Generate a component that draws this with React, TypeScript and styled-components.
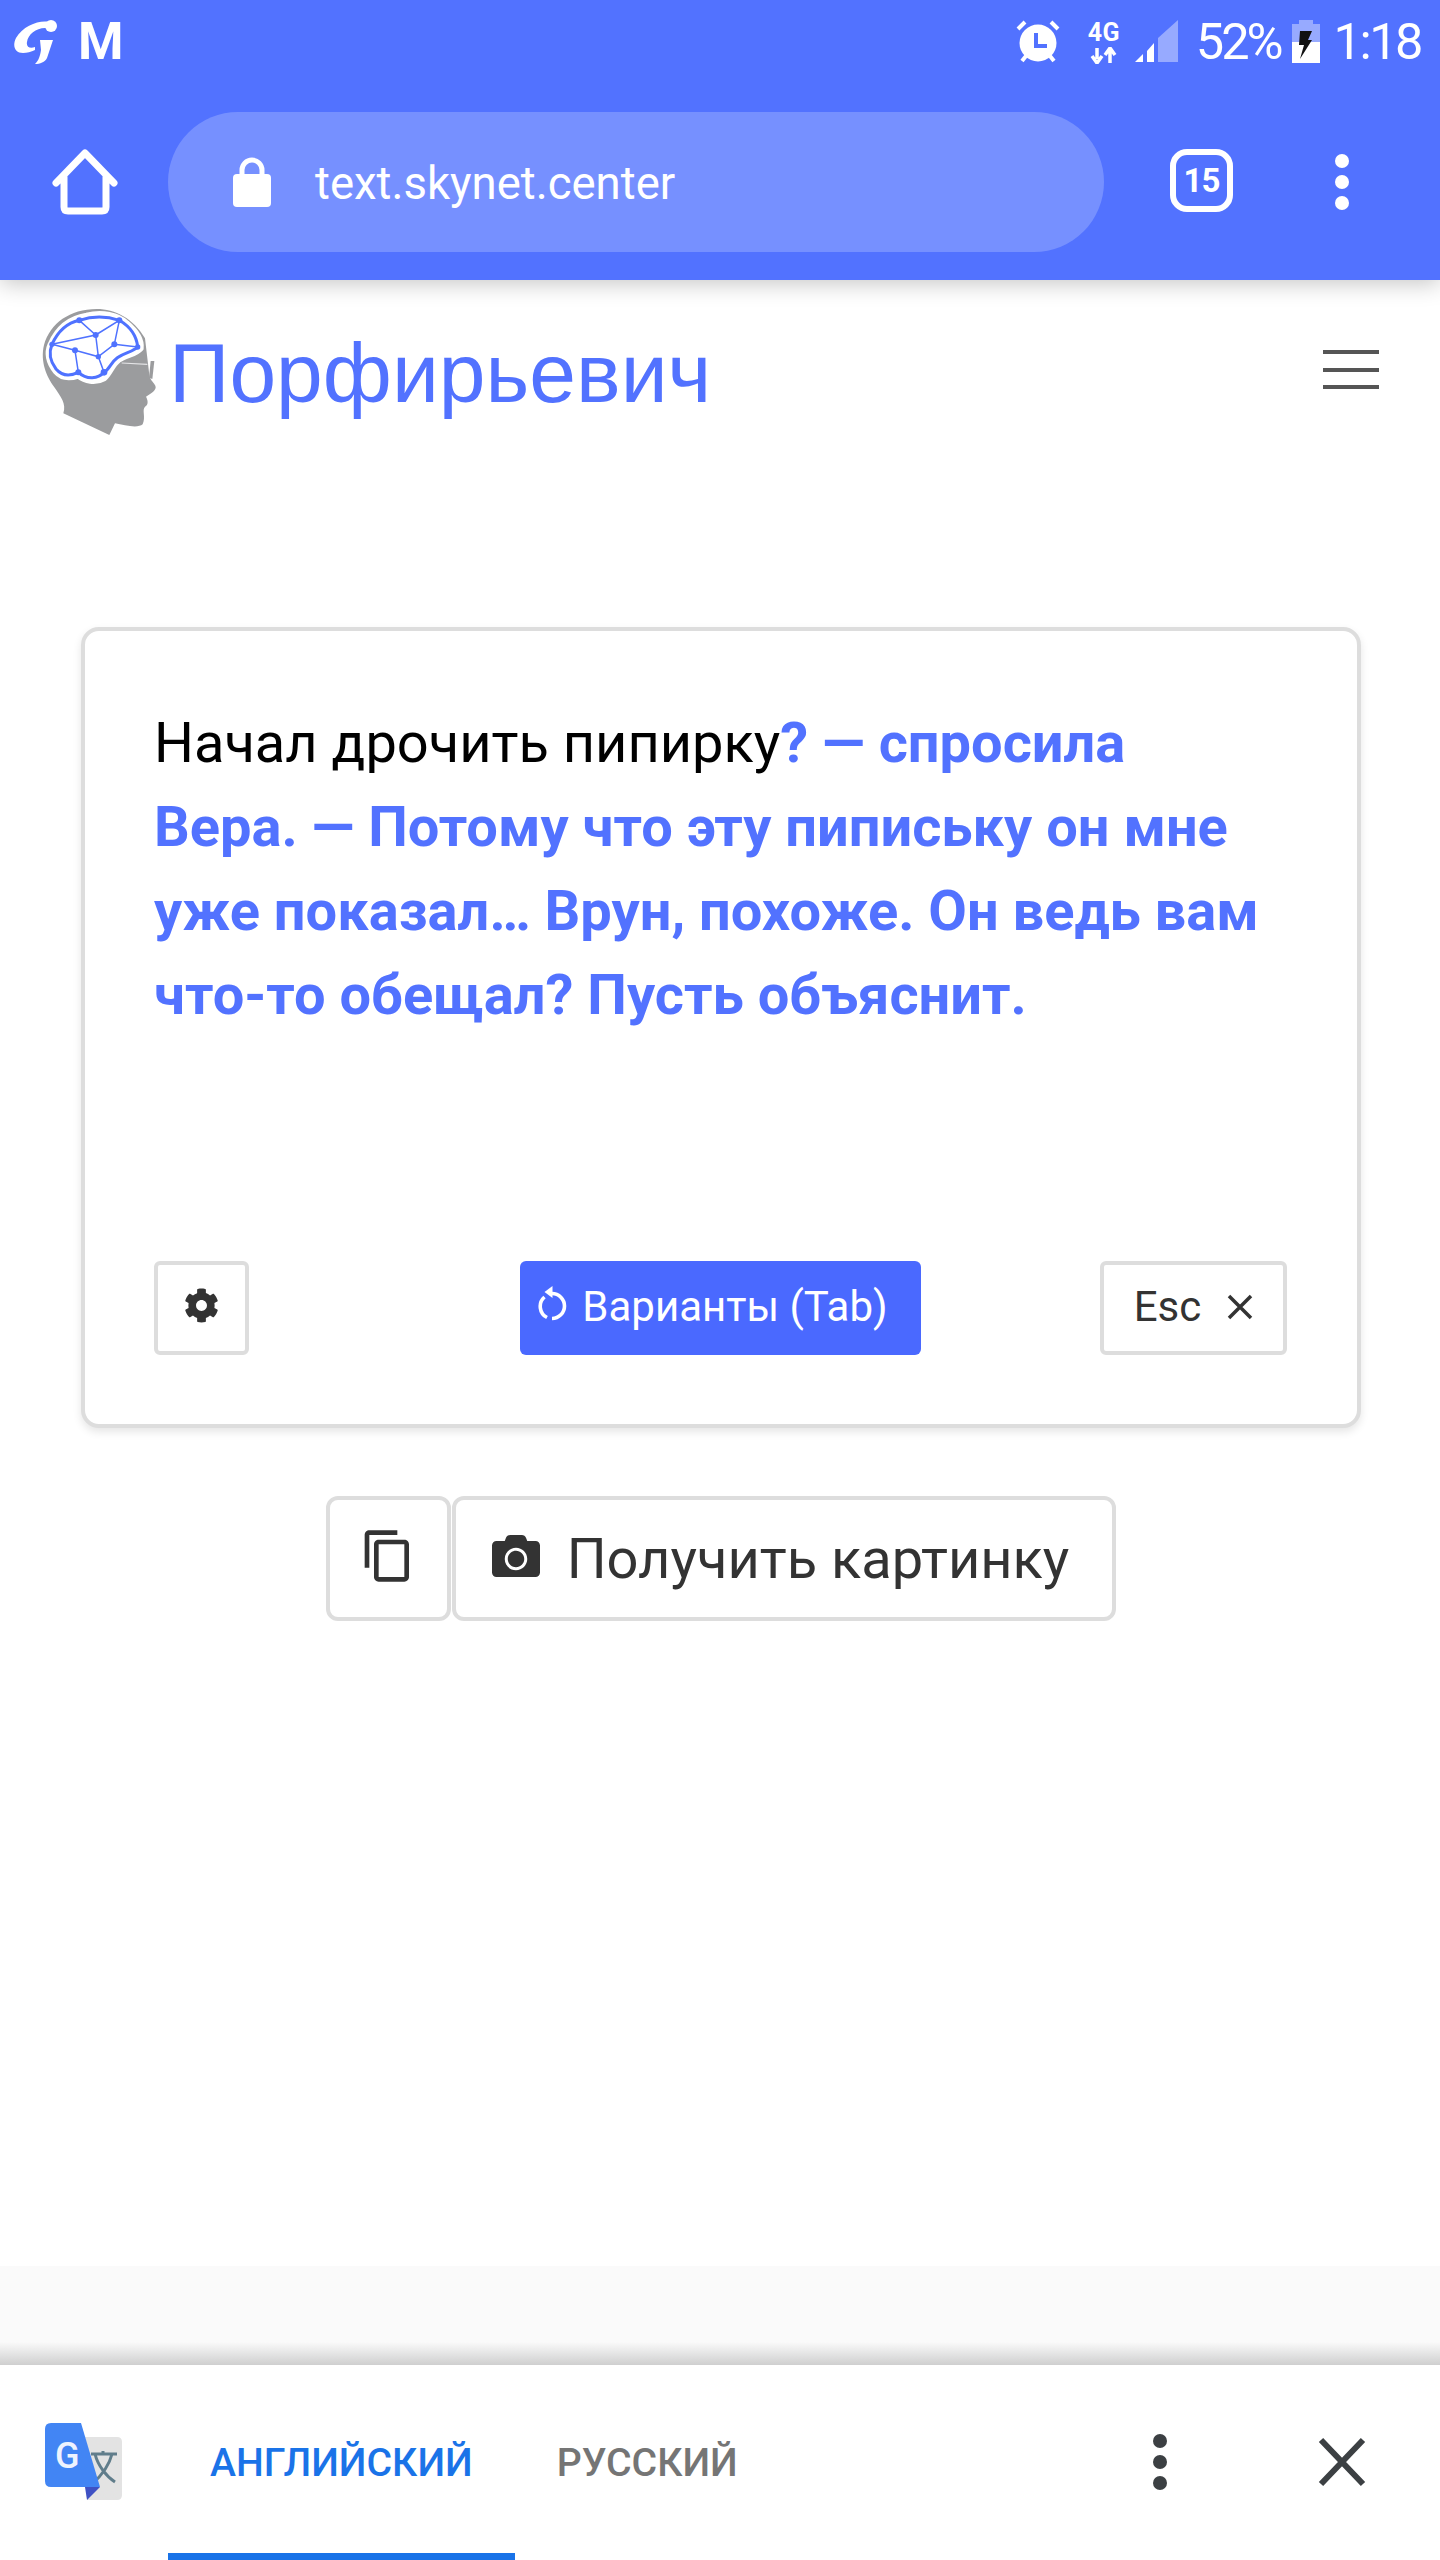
import React from "react";
import styled, { createGlobalStyle } from "styled-components";
import { FaCog, FaCamera } from "react-icons/fa";
import { MdContentCopy } from "react-icons/md";

const Global = createGlobalStyle`
  html, body { margin: 0; padding: 0; background: #fff; }
  * { box-sizing: border-box; }
  body { font-family: Roboto, "Liberation Sans", sans-serif; }
`;

const Page = styled.div`
  width: 1440px;
  height: 2560px;
  display: flex;
  flex-direction: column;
  overflow: hidden;
  background: #fff;
`;

const BrowserChrome = styled.header`
  flex: none;
  height: 280px;
  background: #5272ff;
  color: #fff;
  box-shadow: 0 3px 22px rgba(0, 0, 0, 0.24);
  position: relative;
  z-index: 2;
`;

const StatusBar = styled.div`
  height: 80px;
  display: flex;
  align-items: flex-start;
  justify-content: space-between;
  padding: 0 19px 0 13px;
`;

const StatusGroup = styled.div`
  display: flex;
  align-items: flex-start;
`;

const NoticeLogo = styled.svg`
  flex: none;
  margin-top: 20px;
`;

const NoticeM = styled.span`
  font: 700 52px/1 Roboto, sans-serif;
  margin: 16px 0 0 19px;
`;

const StatusText = styled.span<{ $ml: number; $ls: number }>`
  font: 400 50.5px/1 Roboto, sans-serif;
  letter-spacing: ${(p) => p.$ls}px;
  margin: 17px 0 0 ${(p) => p.$ml}px;
  white-space: nowrap;
`;

const IconSlot = styled.svg<{ $ml: number; $mt: number }>`
  flex: none;
  display: block;
  margin: ${(p) => p.$mt}px 0 0 ${(p) => p.$ml}px;
`;

const NetBadge = styled.div`
  width: 34px;
  margin: 20px 0 0 27px;
  display: flex;
  flex-direction: column;
  align-items: center;
  gap: 2px;
`;

const NetLabel = styled.span`
  font: 700 25px/1 Roboto, sans-serif;
  letter-spacing: 0.5px;
  white-space: nowrap;
`;

const Toolbar = styled.div`
  height: 200px;
  display: flex;
  align-items: flex-start;
  padding-top: 32px;
`;

const HomeButton = styled.svg`
  flex: none;
  margin: 37px 0 0 52px;
`;

const UrlPill = styled.div`
  flex: none;
  width: 936px;
  height: 140px;
  margin-left: 50px;
  padding-left: 65px;
  border-radius: 70px;
  background: #7690ff;
  display: flex;
  align-items: center;
`;

const UrlText = styled.span`
  font: 400 45.5px/1 Roboto, sans-serif;
  margin: 4px 0 0 44px;
`;

const TabCount = styled.div`
  flex: none;
  width: 63px;
  height: 63px;
  margin: 37px 0 0 66px;
  border: 6px solid #fff;
  border-radius: 17px;
  display: flex;
  align-items: center;
  justify-content: center;
  font: 700 33px/1 Roboto, sans-serif;
  letter-spacing: -1px;
`;

const Dots = styled.div<{ $size: number; $gap: number; $color: string }>`
  flex: none;
  display: flex;
  flex-direction: column;
  gap: ${(p) => p.$gap}px;
  i {
    display: block;
    width: ${(p) => p.$size}px;
    height: ${(p) => p.$size}px;
    border-radius: 50%;
    background: ${(p) => p.$color};
  }
`;

const ToolbarDots = styled(Dots)`
  margin: 42px 0 0 102px;
`;

const SiteNav = styled.nav`
  flex: none;
  height: 347px;
  display: flex;
  align-items: flex-start;
  padding-left: 30px;
`;

const Logo = styled.svg`
  flex: none;
  margin-top: 15px;
`;

const Brand = styled.a`
  font: 400 84px/1 "Liberation Sans", Arial, sans-serif;
  color: #5272ff;
  margin: 51px 0 0 -1px;
  white-space: nowrap;
`;

const Burger = styled.div`
  flex: none;
  width: 56px;
  margin: 70px 61px 0 auto;
  display: flex;
  flex-direction: column;
  gap: 13.5px;
  i {
    display: block;
    height: 4px;
    background: #555;
  }
`;

const Main = styled.main`
  flex: 1;
  display: flex;
  flex-direction: column;
  align-items: center;
`;

const Card = styled.section`
  width: 1280px;
  margin-left: 2px;
  padding: 70px 70px 69px 69px;
  background: #fff;
  border: 4px solid #ddd;
  border-radius: 18px;
  box-shadow: 0 4px 8px rgba(0, 0, 0, 0.1);
`;

const Story = styled.div`
  height: 560px;
  padding-right: 14px;
  font: 400 56px/84px Roboto, sans-serif;
  color: #000;
  b {
    font-weight: 700;
    color: #5272ff;
  }
`;

const CardActions = styled.div`
  display: grid;
  grid-template-columns: 1fr auto 1fr;
  align-items: stretch;
`;

const OutlineButton = styled.button`
  height: 94px;
  padding: 0;
  background: #fff;
  border: 4px solid #ddd;
  border-radius: 6px;
  color: #333;
  display: flex;
  align-items: center;
  justify-content: center;
`;

const GearButton = styled(OutlineButton)`
  width: 95px;
  font-size: 35px;
  padding-bottom: 5px;
  justify-self: start;
`;

const PrimaryButton = styled.button`
  width: 401px;
  height: 94px;
  padding: 0 15px 2px 0;
  border: 0;
  border-radius: 6px;
  background: #4a69ff;
  color: #fff;
  display: flex;
  align-items: center;
  justify-content: center;
  gap: 14px;
  font: 400 42px/1 Roboto, sans-serif;
`;

const EscButton = styled(OutlineButton)`
  width: 187px;
  gap: 26px;
  padding-bottom: 2px;
  justify-self: end;
  font: 400 42px/1 Roboto, sans-serif;
`;

const ReloadSvg = styled.svg`
  flex: none;
  margin-bottom: 6px;
`;

const ShareRow = styled.div`
  display: flex;
  gap: 1px;
  margin-top: 68px;
  margin-left: 1px;
`;

const ShareButton = styled.button<{ $w: number; $pr?: number }>`
  width: ${(p) => p.$w}px;
  height: 125px;
  padding: 0 ${(p) => p.$pr ?? 0}px 0 0;
  background: #fff;
  border: 4px solid #ddd;
  border-radius: 12px;
  color: #333;
  display: flex;
  align-items: center;
  justify-content: center;
  gap: 27px;
  font: 400 56px/1 Roboto, sans-serif;
  svg {
    margin-bottom: 6px;
  }
`;

const FooterStrip = styled.div`
  flex: none;
  height: 99px;
  background: linear-gradient(#fafafa 0, #fafafa 76px, #cfcfcf 99px);
`;

const TranslateBar = styled.div`
  flex: none;
  height: 195px;
  display: flex;
  align-items: stretch;
  background: #fff;
`;

const TranslateLogo = styled.svg`
  flex: none;
  margin: 58px 0 0 45px;
`;

const Tab = styled.div<{ $active?: boolean }>`
  flex: none;
  padding: 9px 42px 0;
  display: flex;
  align-items: center;
  font: 500 39.2px/1 Roboto, sans-serif;
  color: ${(p) => (p.$active ? "#1a73e8" : "#757575")};
  border-bottom: 7px solid ${(p) => (p.$active ? "#1a73e8" : "transparent")};
`;

const TabList = styled.div`
  display: flex;
  margin-left: 45px;
`;

const TranslateDots = styled(Dots)`
  margin: 69px 0 0 auto;
`;

const TranslateClose = styled.svg`
  flex: none;
  margin: 72px 74px 0 151px;
`;

const LogoMark = () => (
  <Logo width={140} height={145} viewBox="0 0 420 435">
    <path
      d="M200 42C120 42 60 85 42 150C30 200 50 245 72 275C92 305 110 325 100 355L238 420L255 385C285 392 325 400 338 388C348 365 335 345 345 335C358 328 352 312 348 305C362 295 382 285 376 272C368 258 360 255 358 240L345 130C310 70 255 42 200 42Z"
      fill="#9b9c9e"
    />
    <path
      d="M62 148C85 95 120 70 170 62C215 50 265 60 290 85C320 110 335 135 332 160C320 175 290 180 265 195C245 210 240 235 222 250C195 265 165 258 145 242C120 250 95 250 78 230C58 205 50 175 62 148Z"
      fill="#fff"
      stroke="#fff"
      strokeWidth="18"
    />
    <path
      d="M66 148C88 100 120 82 148 76C190 62 235 65 268 76C300 95 320 125 323 156C310 170 285 172 262 188C242 202 240 222 222 232C205 252 170 255 145 232C118 245 95 242 78 222C60 198 56 172 66 148Z"
      fill="#fff"
      stroke="#4f72ff"
      strokeWidth="9"
      strokeLinejoin="round"
    />
    <g stroke="#4f72ff" strokeWidth="4.5" fill="none">
      <path d="M66 148L197 120L148 76M197 120L268 76L253 148L205 185L197 120M253 148L323 156M66 148L135 166L205 185L222 232M135 166L145 232" />
    </g>
    <g fill="#4f72ff">
      <circle cx="148" cy="76" r="9" />
      <circle cx="268" cy="76" r="9" />
      <circle cx="197" cy="120" r="9" />
      <circle cx="253" cy="148" r="9" />
      <circle cx="66" cy="148" r="8" />
      <circle cx="323" cy="156" r="8" />
      <circle cx="135" cy="166" r="9" />
      <circle cx="205" cy="185" r="8" />
      <circle cx="145" cy="232" r="9" />
      <circle cx="222" cy="232" r="10" />
    </g>
    <path d="M275 204L352 208" fill="none" stroke="#e4e4e6" strokeWidth="3.5" />
    <path d="M362 198L373 198L367 252L357 248Z" fill="#9b9c9e" />
  </Logo>
);

const GMark = () => (
  <NoticeLogo width={46} height={44} viewBox="0 0 46 44">
    <path d="M36 2C26 0 10 6 3 18C-1 26 2 33 10 33C14 33 18 32 22 30L22 27C17 29 13 27 14 22C15 14 24 7 34 8Z" fill="#fff" />
    <circle cx="38" cy="6" r="6" fill="#fff" />
    <path d="M27 20H40L34 38C32 42 27 44 22 44C26 40 27 36 28 30Z" fill="#fff" />
  </NoticeLogo>
);

const AlarmIcon = () => (
  <IconSlot $ml={0} $mt={20} width={44} height={44} viewBox="0 0 44 44">
    <path d="M2 9L9 2M42 9L35 2" stroke="#fff" strokeWidth="4" />
    <path d="M6 41L10 36M38 41L34 36" stroke="#fff" strokeWidth="4" />
    <circle cx="22" cy="23" r="18.5" fill="#fff" />
    <path d="M20 13V26H31" fill="none" stroke="#5272ff" strokeWidth="4" />
  </IconSlot>
);

const SignalIcon = () => (
  <IconSlot $ml={14} $mt={19} width={44} height={44} viewBox="0 0 44 44">
    <path d="M0 43L8 35V43Z" fill="#fff" />
    <path d="M12 43V32L19 24V43Z" fill="#fff" />
    <path d="M23 43V19L43 1V43Z" fill="#fff" fillOpacity="0.4" />
  </IconSlot>
);

const BatteryIcon = () => (
  <IconSlot $ml={11} $mt={20} width={28} height={43} viewBox="0 0 28 43">
    <path d="M7 0H21V4H28V43H0V4H7Z" fill="#fff" fillOpacity="0.4" />
    <path d="M0 22H28V43H0Z" fill="#fff" />
    <path d="M8 11H20L16 20H20L8 39L12 25H7Z" fill="#111" />
  </IconSlot>
);

const HomeIcon = () => (
  <HomeButton width={66} height={66} viewBox="0 0 66 66">
    <path
      d="M4 34L33 4L62 34M12 28V58Q12 62 16 62H50Q54 62 54 58V28"
      fill="none"
      stroke="#fff"
      strokeWidth="7"
      strokeLinecap="round"
      strokeLinejoin="round"
    />
  </HomeButton>
);

const LockIcon = () => (
  <svg width={38} height={50} viewBox="0 0 38 50">
    <path d="M9 20V13A10 10 0 0 1 29 13V20" fill="none" stroke="#fff" strokeWidth="5" />
    <rect x="0" y="17" width="38" height="33" rx="4" fill="#fff" />
  </svg>
);

const ReloadIcon = () => (
  <ReloadSvg width={30} height={36} viewBox="0 0 30 36">
    <path d="M14 7.5A12.5 12.5 0 0 1 14 32.5" fill="none" stroke="#fff" strokeWidth="3.6" />
    <path d="M9 31.5A12.5 12.5 0 0 1 6.5 11" fill="none" stroke="#fff" strokeWidth="3.6" />
    <path d="M14.5 0V12L6.5 6Z" fill="#fff" />
  </ReloadSvg>
);

const CloseGlyph = () => (
  <svg width={26} height={26} viewBox="0 0 26 26">
    <path d="M2 2L24 24M24 2L2 24" stroke="#333" strokeWidth="3.5" />
  </svg>
);

const TranslateMark = () => (
  <TranslateLogo width={78} height={78} viewBox="0 0 78 78">
    <path d="M36 14H72Q77 14 77 19V72Q77 77 72 77H42Z" fill="#e3e3e3" />
    <path d="M46 31H72M58 28V32M50 31C53 43 62 54 70 59M67 31C64 43 55 54 47 61" fill="none" stroke="#607d8b" strokeWidth="3" />
    <path d="M6 0H36L55 64H6Q0 64 0 58V6Q0 0 6 0Z" fill="#4285f4" />
    <path d="M40 64H55L42 77Z" fill="#3f51c4" />
    <text x="10" y="45" fontFamily="Roboto, sans-serif" fontWeight="500" fontSize="36" fill="#eef3fe">G</text>
  </TranslateLogo>
);

const CloseBig = () => (
  <TranslateClose width={48} height={50} viewBox="0 0 48 50">
    <path d="M3 3L45 47M45 3L3 47" stroke="#3c4043" strokeWidth="6" />
  </TranslateClose>
);

export default function App() {
  return (
    <Page>
      <Global />
      <BrowserChrome>
        <StatusBar>
          <StatusGroup>
            <GMark />
            <NoticeM>M</NoticeM>
          </StatusGroup>
          <StatusGroup>
            <AlarmIcon />
            <NetBadge>
              <NetLabel>4G</NetLabel>
              <svg width={28} height={17} viewBox="0 0 28 17">
                <path d="M7 1V12M2 9L7 16L12 9M20 16V4M15 8L20 1L25 8" fill="none" stroke="#fff" strokeWidth="3.5" />
              </svg>
            </NetBadge>
            <SignalIcon />
            <StatusText $ml={17} $ls={-3}>52%</StatusText>
            <BatteryIcon />
            <StatusText $ml={14} $ls={-2.5}>1:18</StatusText>
          </StatusGroup>
        </StatusBar>
        <Toolbar>
          <HomeIcon />
          <UrlPill>
            <LockIcon />
            <UrlText>text.skynet.center</UrlText>
          </UrlPill>
          <TabCount>15</TabCount>
          <ToolbarDots $size={14} $gap={7} $color="#fff">
            <i />
            <i />
            <i />
          </ToolbarDots>
        </Toolbar>
      </BrowserChrome>
      <SiteNav>
        <LogoMark />
        <Brand>Порфирьевич</Brand>
        <Burger>
          <i />
          <i />
          <i />
        </Burger>
      </SiteNav>
      <Main>
        <Card>
          <Story>
            Начал дрочить пипирку
            <b>? — спросила Вера. — Потому что эту пипиську он мне уже показал… Врун, похоже. Он ведь вам что-то обещал? Пусть объяснит.</b>
          </Story>
          <CardActions>
            <GearButton>
              <FaCog />
            </GearButton>
            <PrimaryButton>
              <ReloadIcon />
              Варианты (Tab)
            </PrimaryButton>
            <EscButton>
              Esc
              <CloseGlyph />
            </EscButton>
          </CardActions>
        </Card>
        <ShareRow>
          <ShareButton $w={125}>
            <MdContentCopy size={56} />
          </ShareButton>
          <ShareButton $w={664} $pr={6}>
            <FaCamera size={48} />
            Получить картинку
          </ShareButton>
        </ShareRow>
      </Main>
      <FooterStrip />
      <TranslateBar>
        <TranslateMark />
        <TabList>
          <Tab $active>АНГЛИЙСКИЙ</Tab>
          <Tab>РУССКИЙ</Tab>
        </TabList>
        <TranslateDots $size={14} $gap={7} $color="#3c4043">
          <i />
          <i />
          <i />
        </TranslateDots>
        <CloseBig />
      </TranslateBar>
    </Page>
  );
}
